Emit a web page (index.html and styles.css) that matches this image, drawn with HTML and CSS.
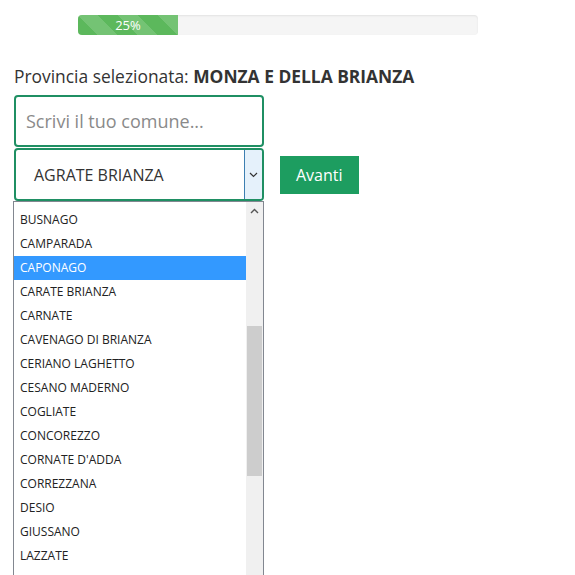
FILE: index.html
```html
<!DOCTYPE html>
<html lang="it">
<head>
  <meta charset="UTF-8">
  <meta name="viewport" content="width=device-width, initial-scale=1.0">
  <title>Scegli il comune</title>
  <link rel="stylesheet" href="styles.css">
</head>
<body>
  <div class="progress">
    <div class="progress-bar" style="width: 25%;">25%</div>
  </div>

  <p class="provincia">Provincia selezionata: <b>MONZA E DELLA BRIANZA</b></p>

  <form class="comune-form">
    <input type="text" class="field" placeholder="Scrivi il tuo comune...">
    <div class="select-row">
      <div class="select-box">
        <span class="select-value">AGRATE BRIANZA</span>
        <span class="select-arrow">
          <svg width="9" height="6" viewBox="0 0 9 6"><path d="M1 1l3.5 3.5L8 1" fill="none" stroke="#333" stroke-width="1.2"/></svg>
        </span>
      </div>
      <button type="button" class="btn">Avanti</button>
    </div>
    <div class="dropdown">
      <ul class="options">
        <li>BUSNAGO</li>
        <li>CAMPARADA</li>
        <li class="active">CAPONAGO</li>
        <li>CARATE BRIANZA</li>
        <li>CARNATE</li>
        <li>CAVENAGO DI BRIANZA</li>
        <li>CERIANO LAGHETTO</li>
        <li>CESANO MADERNO</li>
        <li>COGLIATE</li>
        <li>CONCOREZZO</li>
        <li>CORNATE D'ADDA</li>
        <li>CORREZZANA</li>
        <li>DESIO</li>
        <li>GIUSSANO</li>
        <li>LAZZATE</li>
      </ul>
      <div class="scrollbar">
        <span class="scroll-up">
          <svg width="9" height="6" viewBox="0 0 9 6"><path d="M1 5l3.5-3.5L8 5" fill="none" stroke="#555" stroke-width="1.4"/></svg>
        </span>
        <span class="scroll-thumb"></span>
      </div>
    </div>
  </form>
</body>
</html>
```

FILE: styles.css
```css
body {
  margin: 0;
  padding: 15px 14px 0;
  font-family: "Open Sans", Arial, sans-serif;
  color: #333;
  background-color: white;
  overflow: hidden;
}
.progress {
  margin-left: 64px;
  width: 400px;
  height: 20px;
  background-color: #f5f5f5;
  border-radius: 4px;
  box-shadow: inset 0 1px 2px rgba(0, 0, 0, 0.08);
  overflow: hidden;
}
.progress-bar {
  height: 100%;
  background-color: #5cb85c;
  background-image: linear-gradient(45deg, rgba(255, 255, 255, 0.15) 25%, transparent 25%, transparent 50%, rgba(255, 255, 255, 0.15) 50%, rgba(255, 255, 255, 0.15) 75%, transparent 75%, transparent);
  background-size: 40px 40px;
  color: white;
  font-size: 13px;
  line-height: 20px;
  text-align: center;
}
.provincia {
  margin: 30px 0 8px;
  font-size: 17.4px;
  line-height: 22px;
}
.provincia b {
  font-weight: 700;
}
.comune-form {
  display: flex;
  flex-direction: column;
  align-items: flex-start;
}
.field {
  box-sizing: border-box;
  width: 250px;
  height: 52px;
  margin: 0 0 1px;
  padding: 0 10px;
  border: 2px solid #1f8f63;
  border-radius: 4px;
  font-family: "Open Sans", Arial, sans-serif;
  font-size: 18px;
  color: #333;
}
.field::placeholder {
  color: #8a8a8a;
}
.select-row {
  display: flex;
  align-items: center;
  gap: 16px;
}
.select-box {
  box-sizing: border-box;
  display: flex;
  align-items: stretch;
  width: 250px;
  height: 53px;
  border: 2px solid #1f8f63;
  border-radius: 4px;
  overflow: hidden;
}
.select-value {
  flex: 1;
  display: flex;
  align-items: center;
  padding-left: 18px;
  font-size: 16px;
}
.select-arrow {
  width: 17px;
  display: flex;
  align-items: center;
  justify-content: center;
  background-color: #e5f1fb;
  border-left: 1px solid #3c7fb1;
}
.btn {
  margin-top: 1px;
  padding: 0 16px;
  height: 38px;
  background-color: #1d9d60;
  color: white;
  border: none;
  font-family: "Open Sans", Arial, sans-serif;
  font-size: 16px;
  cursor: pointer;
}
.dropdown {
  display: flex;
  width: 249px;
  height: 400px;
  margin-left: -1px;
  border: 1px solid #828790;
  background-color: white;
}
.options {
  flex: 1;
  margin: 0;
  padding: 6px 0 0;
  list-style: none;
  font-family: "Open Sans", Arial, sans-serif;
  font-size: 12px;
}
.options li {
  height: 24px;
  line-height: 24px;
  padding-left: 6px;
  color: #222;
}
.options li.active {
  background-color: #3399ff;
  color: white;
}
.scrollbar {
  width: 17px;
  display: flex;
  flex-direction: column;
  background-color: #f0f0f0;
}
.scroll-up {
  height: 17px;
  display: flex;
  align-items: center;
  justify-content: center;
}
.scroll-thumb {
  margin: 107px 1px 0;
  height: 150px;
  background-color: #cdcdcd;
}
```
